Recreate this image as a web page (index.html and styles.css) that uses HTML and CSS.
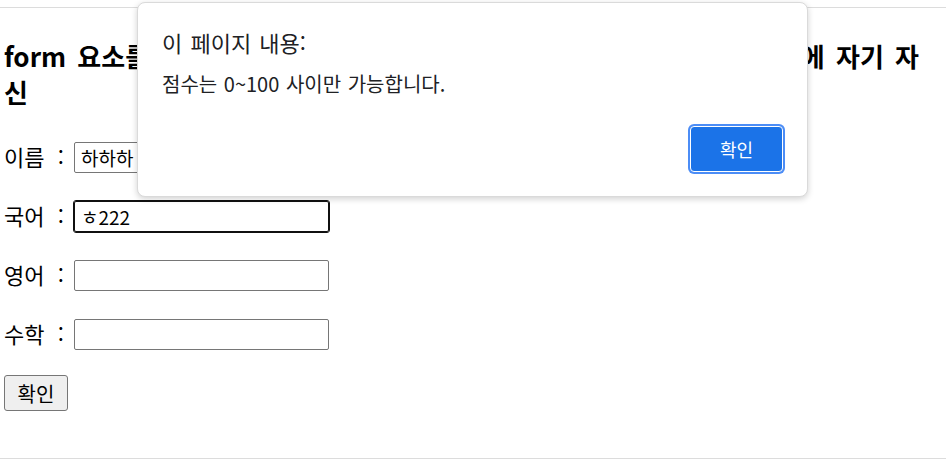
FILE: index.html
```html
<!DOCTYPE html>
<html lang="ko">
<head>
    <meta charset="UTF-8">
    <meta name="viewport" content="width=device-width, initial-scale=1.0">
    <title>성적 입력</title>
    <link rel="stylesheet" href="styles.css">
</head>
<body>

    <div class="frame">
        <!-- Heading -->
        <h2 class="page-title">form 요소를 제출하면 실행되는 이벤트 함수 안의 대상은 바로 그 양식에 자기 자신</h2>

        <!-- Score form -->
        <form class="score-form" id="scoreForm">
            <div class="field-row">
                <label class="field-label" for="name">이름 :</label>
                <input class="field-input" type="text" id="name" value="하하하">
            </div>
            <div class="field-row">
                <label class="field-label" for="kor">국어 :</label>
                <input class="field-input is-focused" type="text" id="kor" value="ㅎ222">
            </div>
            <div class="field-row">
                <label class="field-label" for="eng">영어 :</label>
                <input class="field-input" type="text" id="eng">
            </div>
            <div class="field-row">
                <label class="field-label" for="math">수학 :</label>
                <input class="field-input" type="text" id="math">
            </div>
            <div class="submit-row">
                <button class="submit-button" type="button">확인</button>
            </div>
        </form>
    </div>

    <!-- Alert dialog -->
    <div class="alert-box">
        <div class="alert-title">이 페이지 내용:</div>
        <div class="alert-message">점수는 0~100 사이만 가능합니다.</div>
        <div class="alert-actions">
            <button class="alert-button" type="button">확인</button>
        </div>
    </div>

</body>
</html>
```

FILE: styles.css
```css
body {
    margin: 0;
    font-family: "Noto Sans CJK KR", "Noto Sans", sans-serif;
    color: #000;
    background: #fff;
}
.frame {
    margin-top: 7px;
    height: 450px;
    padding-left: 4px;
    border-top: 1px solid #dcdcdc;
    border-bottom: 1px solid #dcdcdc;
    overflow: hidden;
}
.page-title {
    margin: 30px 8px 32px 0;
    font-size: 26px;
    line-height: 36px;
    font-weight: bold;
    word-spacing: 4px;
}
.score-form {
    display: flex;
    flex-direction: column;
    gap: 28px;
}
.field-row {
    display: flex;
    align-items: center;
    height: 31px;
}
.field-label {
    width: 70px;
    padding-bottom: 4px;
    font-size: 22px;
    word-spacing: 7px;
}
.field-input {
    box-sizing: border-box;
    width: 255px;
    height: 31px;
    padding: 0 6px;
    border: 1px solid #767676;
    border-radius: 2px;
    font-family: inherit;
    font-size: 19px;
    color: #000;
}
.field-input.is-focused {
    border-color: #101010;
    outline: 1px solid #101010;
}
.submit-row {
    margin-top: -3px;
}
.submit-button {
    width: 64px;
    height: 36px;
    padding: 0;
    background-color: #efefef;
    border: 1px solid #767676;
    border-radius: 3px;
    font-family: inherit;
    font-size: 20px;
    color: #000;
}
.alert-box {
    position: absolute;
    top: 2px;
    left: 137px;
    width: 671px;
    height: 195px;
    box-sizing: border-box;
    padding: 24px 24px 0 24px;
    background: #fff;
    border-radius: 8px;
    border: 1px solid #dadada;
    box-shadow: 0 2px 6px rgba(0, 0, 0, 0.18);
    color: #202124;
}
.alert-title {
    font-size: 22px;
    line-height: 30px;
    word-spacing: 2px;
}
.alert-message {
    margin-top: 14px;
    font-size: 20px;
    line-height: 26px;
    word-spacing: 1px;
}
.alert-actions {
    display: flex;
    justify-content: flex-end;
    margin-top: 29px;
}
.alert-button {
    width: 93px;
    height: 46px;
    background-color: #1b73e8;
    color: #fff;
    border: 1px solid #fff;
    border-radius: 4px;
    box-shadow: 0 0 0 2px #4c8df6;
    font-family: inherit;
    font-size: 18px;
}
```
